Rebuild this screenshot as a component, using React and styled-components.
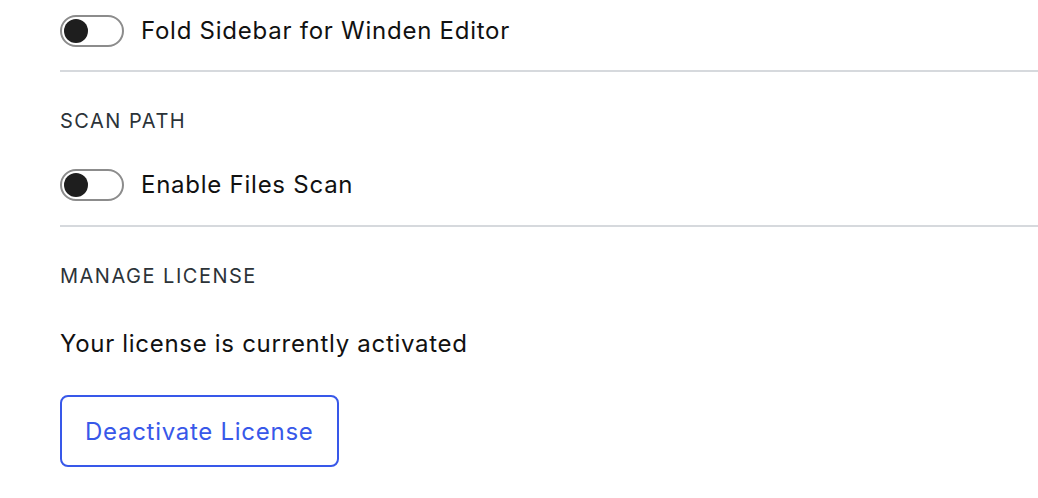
import React from "react";
import styled, { createGlobalStyle } from "styled-components";

const colors = {
  text: "#111111",
  knob: "#1e1e1e",
  heading: "#2c3338",
  divider: "#d6d9dd",
  toggleBorder: "#8c8c8c",
  blue: "#3858e9",
};

const GlobalStyle = createGlobalStyle`
  body {
    margin: 0;
    background: #ffffff;
    font-family: Inter, "Liberation Sans", sans-serif;
    color: ${colors.text};
  }
`;

const Page = styled.main`
  padding: 15px 0 0 60px;
`;

const Section = styled.section`
  display: flex;
  flex-direction: column;
  padding-top: ${(p) => p.$top || 0}px;
  padding-bottom: ${(p) => p.$bottom || 0}px;
  border-bottom: ${(p) => (p.$divider ? `2px solid ${colors.divider}` : "none")};
`;

const Heading = styled.h2`
  margin: 0 0 ${(p) => p.$gap || 34}px;
  font-size: 20px;
  line-height: 28px;
  font-weight: 400;
  letter-spacing: 1.5px;
  text-transform: uppercase;
  color: ${colors.heading};
`;

const ToggleRow = styled.label`
  display: flex;
  align-items: center;
  gap: 17px;
  font-size: 24px;
  line-height: 32px;
  letter-spacing: 0.75px;
  cursor: pointer;
`;

const Track = styled.span`
  position: relative;
  box-sizing: border-box;
  width: 64px;
  height: 32px;
  border: 2px solid ${colors.toggleBorder};
  border-radius: 16px;
  background: #fff;
  flex-shrink: 0;

  &::after {
    content: "";
    position: absolute;
    left: 2px;
    top: 2px;
    width: 24px;
    height: 24px;
    border-radius: 50%;
    background: ${colors.knob};
  }
`;

const Text = styled.p`
  margin: 0 0 35px;
  font-size: 24px;
  line-height: 32px;
  letter-spacing: 0.7px;
`;

const Button = styled.button`
  align-self: flex-start;
  box-sizing: border-box;
  height: 72px;
  padding: 0 23px;
  border: 2px solid ${colors.blue};
  border-radius: 8px;
  background: #fff;
  color: ${colors.blue};
  font-family: inherit;
  font-size: 24px;
  letter-spacing: 0.72px;
  cursor: pointer;
`;

const Toggle = ({ label }) => (
  <ToggleRow>
    <Track />
    {label}
  </ToggleRow>
);

export default function App() {
  return (
    <Page>
      <GlobalStyle />
      <Section $divider $bottom={23}>
        <Toggle label="Fold Sidebar for Winden Editor" />
      </Section>
      <Section $divider $top={35} $bottom={24}>
        <Heading>Scan Path</Heading>
        <Toggle label="Enable Files Scan" />
      </Section>
      <Section $top={35}>
        <Heading $gap={38}>Manage License</Heading>
        <Text>Your license is currently activated</Text>
        <Button>Deactivate License</Button>
      </Section>
    </Page>
  );
}
